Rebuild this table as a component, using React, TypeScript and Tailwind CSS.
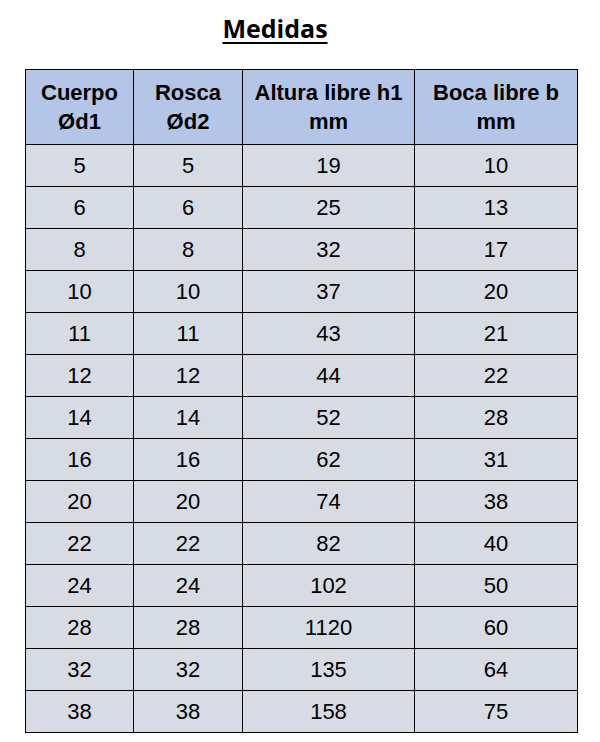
import React from 'react'

const rows = [
  [5, 5, 19, 10],
  [6, 6, 25, 13],
  [8, 8, 32, 17],
  [10, 10, 37, 20],
  [11, 11, 43, 21],
  [12, 12, 44, 22],
  [14, 14, 52, 28],
  [16, 16, 62, 31],
  [20, 20, 74, 38],
  [22, 22, 82, 40],
  [24, 24, 102, 50],
  [28, 28, 1120, 60],
  [32, 32, 135, 64],
  [38, 38, 158, 75],
]

const headers = [
  ['Cuerpo', 'Ød1'],
  ['Rosca', 'Ød2'],
  ['Altura libre h1', 'mm'],
  ['Boca libre b', 'mm'],
]

const App = () => {
  return (
    <div className="w-[600px] h-[742px] bg-white pt-[11px]">
      <h1 className="w-[550px] text-center font-['Open_Sans',sans-serif] font-bold text-[25px] leading-[34px] underline underline-offset-[4px] decoration-[2px] text-black">
        Medidas
      </h1>
      <table className="ml-[25px] mt-[24px] border-collapse font-['Liberation_Sans',Arial,sans-serif] text-black">
        <colgroup>
          <col className="w-[108px]" />
          <col className="w-[109px]" />
          <col className="w-[172px]" />
          <col className="w-[163px]" />
        </colgroup>
        <thead>
          <tr className="h-[75px] bg-[#b4c6e7]">
            {headers.map((h, i) => (
              <th key={i} className="border border-black p-0 text-center font-bold text-[22px] leading-[29px] whitespace-nowrap">
                {h[0]}
                <br />
                {h[1]}
              </th>
            ))}
          </tr>
        </thead>
        <tbody>
          {rows.map((r, i) => (
            <tr key={i} className="h-[42px] bg-[#d7dce4]">
              {r.map((v, j) => (
                <td key={j} className="border border-black p-0 text-center text-[22px] leading-[24px]">
                  {v}
                </td>
              ))}
            </tr>
          ))}
        </tbody>
      </table>
    </div>
  )
}

export default App
